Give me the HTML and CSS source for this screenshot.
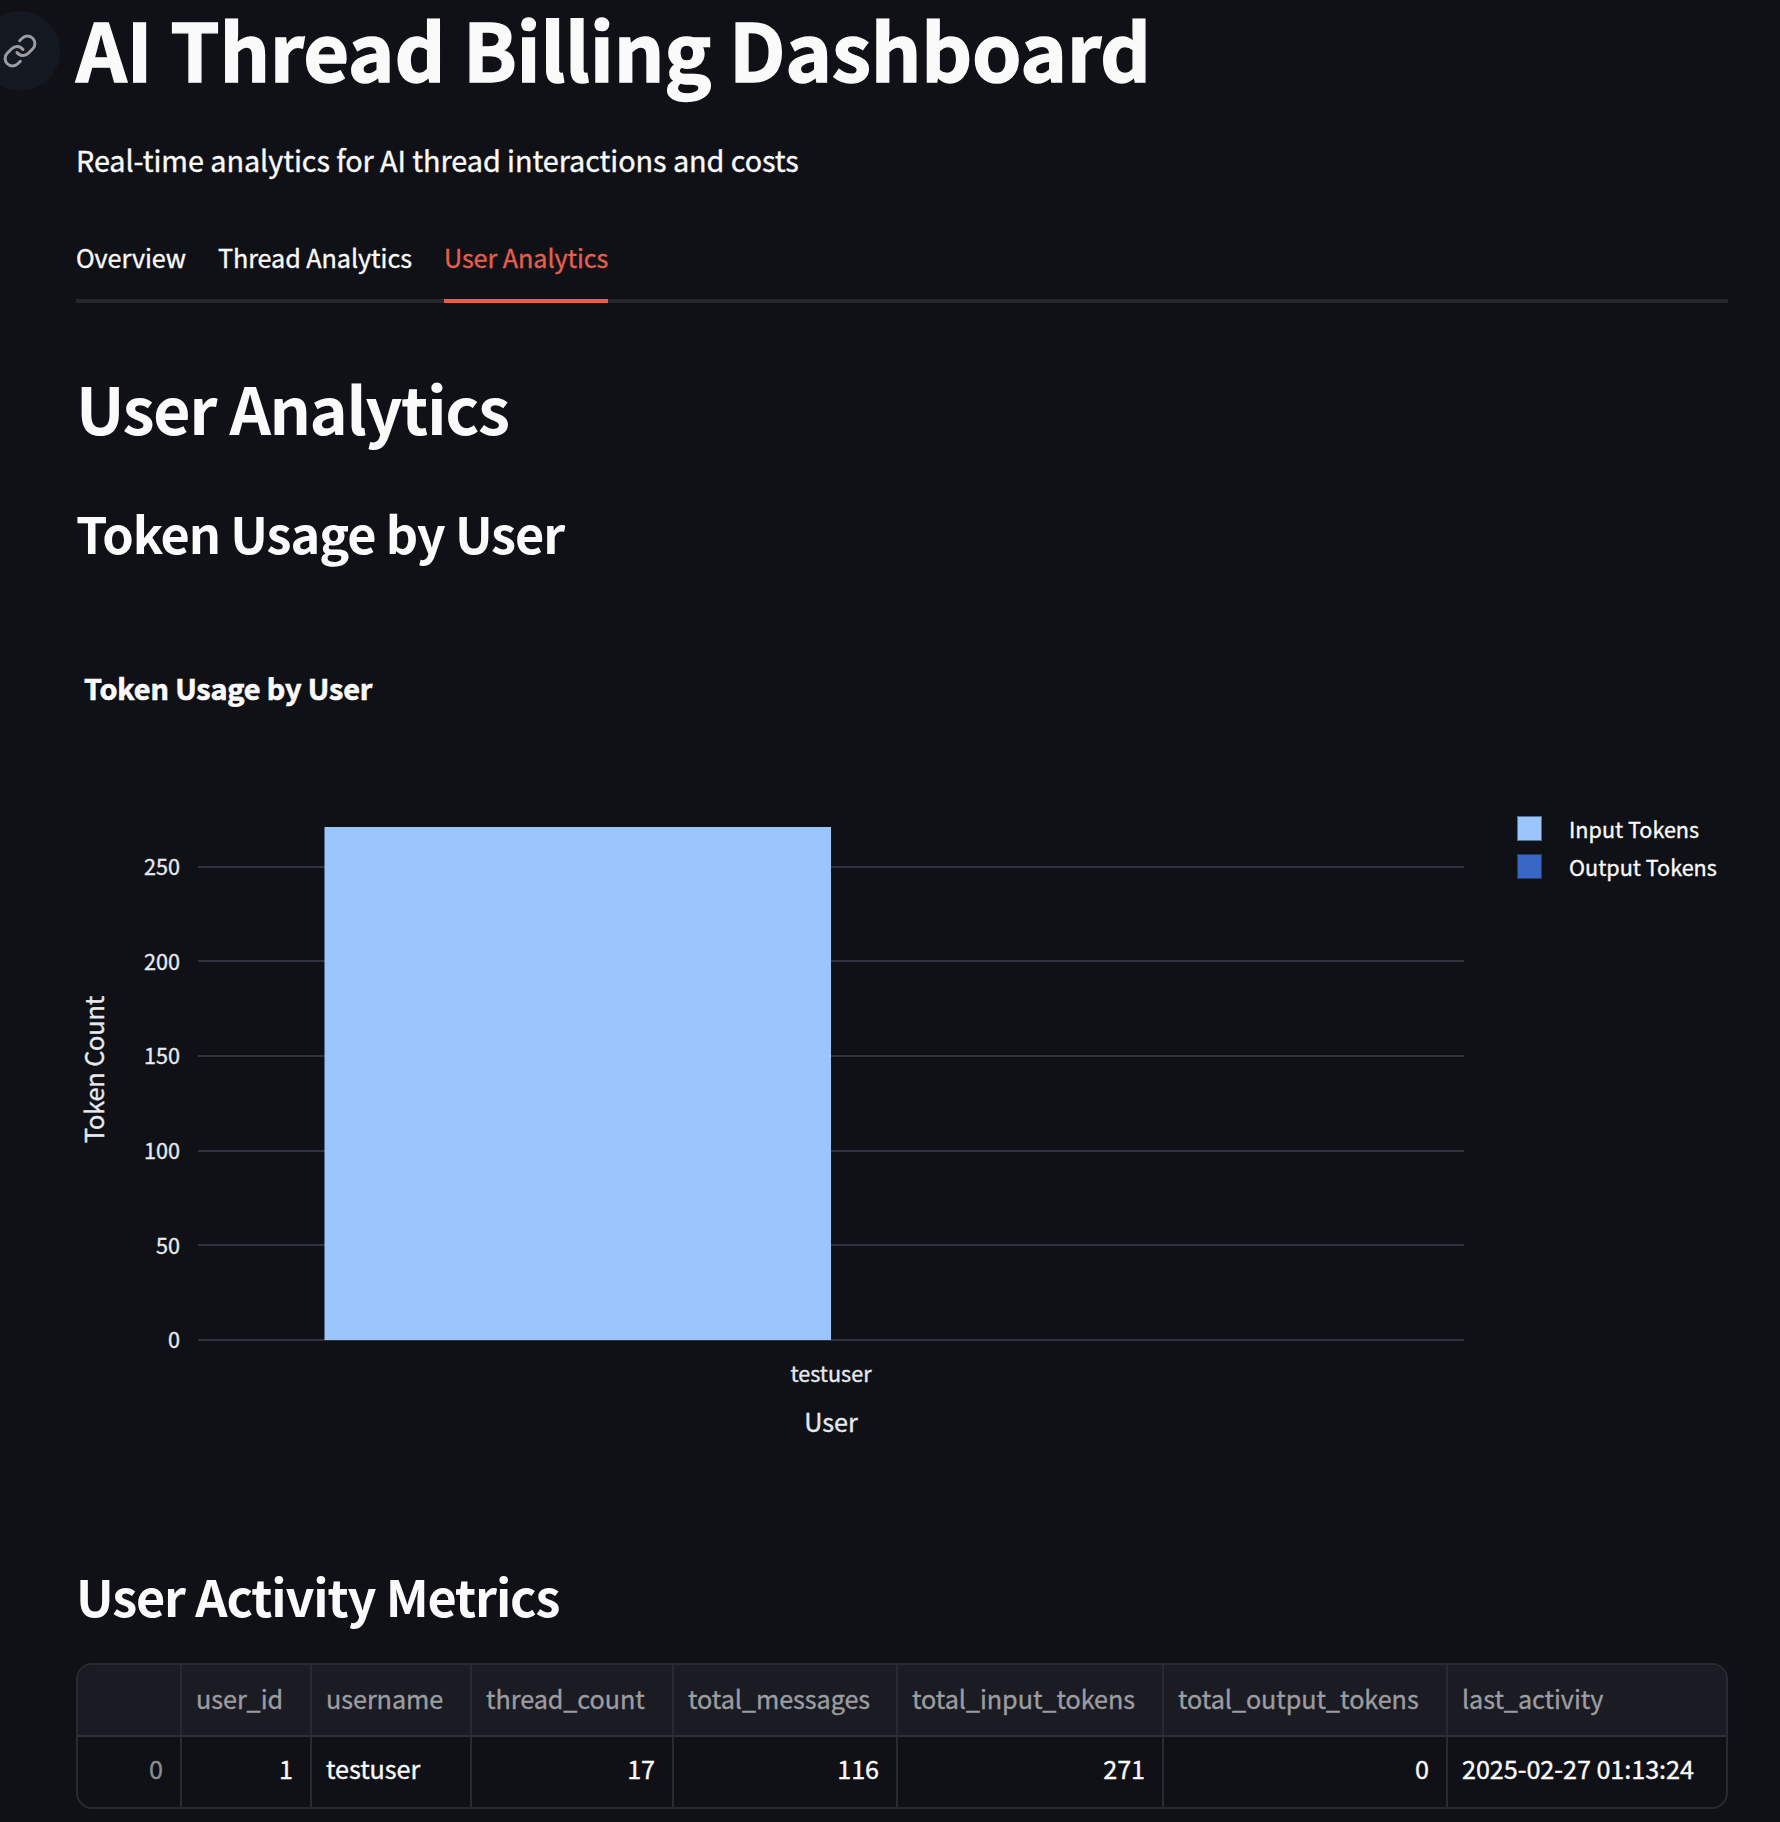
FILE: index.html
```html
<!DOCTYPE html>
<html lang="en">
<head>
<meta charset="utf-8">
<title>AI Thread Billing Dashboard</title>
<link rel="stylesheet" href="styles.css">
</head>
<body>
<main class="page">
  <header class="hero">
    <a class="anchor" href="#title" aria-label="Link to heading">
      <svg class="anchor-icon" viewBox="0 0 24 24"><path d="M10 13a5 5 0 0 0 7.54.54l3-3a5 5 0 0 0-7.07-7.07l-1.72 1.71"/><path d="M14 11a5 5 0 0 0-7.54-.54l-3 3a5 5 0 0 0 7.07 7.07l1.71-1.71"/></svg>
    </a>
    <h1 class="title" id="title">AI Thread Billing Dashboard</h1>
  </header>
  <p class="lead">Real-time analytics for AI thread interactions and costs</p>
  <nav class="tabs">
    <a class="tab">Overview</a>
    <a class="tab">Thread Analytics</a>
    <a class="tab tab-active">User Analytics</a>
  </nav>
  <h2 class="section">User Analytics</h2>
  <h3 class="subsection sub-usage">Token Usage by User</h3>
  <svg class="chart" viewBox="76 620 1652 880">
    <text class="chart-title" x="84" y="700">Token Usage by User</text>
    <g class="grid">
      <path d="M198 867H1464M198 961H1464M198 1056H1464M198 1151H1464M198 1245H1464M198 1340H1464"/>
    </g>
    <rect class="bar" x="324.5" y="827" width="506.5" height="513"/>
    <g class="tick tick-y">
      <text x="180" y="875">250</text>
      <text x="180" y="970">200</text>
      <text x="180" y="1064">150</text>
      <text x="180" y="1159">100</text>
      <text x="180" y="1254">50</text>
      <text x="180" y="1348">0</text>
    </g>
    <text class="tick tick-x" x="831" y="1382">testuser</text>
    <text class="axis" x="831" y="1432">User</text>
    <text class="axis axis-y" transform="translate(104 1069.5) rotate(-90)">Token Count</text>
    <rect class="swatch swatch-in" x="1517.5" y="816.5" width="24" height="24"/>
    <rect class="swatch swatch-out" x="1517.5" y="854.5" width="24" height="24"/>
    <text class="legend" x="1569" y="838">Input Tokens</text>
    <text class="legend" x="1569" y="876">Output Tokens</text>
  </svg>
  <h3 class="subsection sub-metrics">User Activity Metrics</h3>
  <div class="table">
    <div class="row row-head">
      <span class="cell"></span><span class="cell">user_id</span><span class="cell">username</span><span class="cell">thread_count</span><span class="cell">total_messages</span><span class="cell">total_input_tokens</span><span class="cell">total_output_tokens</span><span class="cell">last_activity</span>
    </div>
    <div class="row">
      <span class="cell num index">0</span><span class="cell num">1</span><span class="cell">testuser</span><span class="cell num">17</span><span class="cell num">116</span><span class="cell num">271</span><span class="cell num">0</span><span class="cell">2025-02-27 01:13:24</span>
    </div>
  </div>
</main>
</body>
</html>
```
FILE: styles.css
```css
* { box-sizing: border-box; }
body {
  margin: 0;
  background: #101116;
  color: #fafafa;
  font-family: "Noto Sans CJK JP", "Noto Sans", sans-serif;
  -webkit-text-stroke: 0.35px;
}
.page {
  width: 1780px;
  height: 1822px;
  padding: 0 52px 0 76px;
  display: flex;
  flex-direction: column;
}
h1, h2, h3, p { margin: 0; white-space: nowrap; }
.hero { position: relative; }
.anchor {
  position: absolute;
  left: -96px;
  top: 11px;
  width: 80px;
  height: 80px;
  border-radius: 50%;
  background: #141820;
  display: flex;
  align-items: center;
  justify-content: center;
}
.anchor-icon {
  width: 36px;
  height: 36px;
  fill: none;
  stroke: #9c9da0;
  stroke-width: 2;
  stroke-linecap: round;
  stroke-linejoin: round;
}
.title {
  font-size: 79.2px;
  line-height: 95px;
  font-weight: 700;
  letter-spacing: -0.24px;
  -webkit-text-stroke: 1.4px;
}
.lead { margin-top: 39px; font-size: 28.8px; line-height: 51px; letter-spacing: -0.06px; }
.tabs {
  margin-top: 50px;
  height: 68px;
  display: flex;
  gap: 32px;
  box-shadow: inset 0 -4px #26272d;
}
.tab { font-size: 25.2px; line-height: 45px; letter-spacing: -0.07px; white-space: nowrap; }
.tab-active { color: #e55f4e; border-bottom: 4px solid #e55f4e; }
.section {
  margin-top: 61px;
  font-size: 64.8px;
  line-height: 86px;
  font-weight: 700;
  letter-spacing: -1.45px;
  -webkit-text-stroke: 0;
}
.subsection {
  font-size: 50.4px;
  line-height: 67px;
  font-weight: 700;
  letter-spacing: -1.08px;
  -webkit-text-stroke: 0;
}
.sub-usage { margin-top: 49px; }
.chart { display: block; width: 1652px; height: 880px; margin-top: 54px; flex: none; }
.chart-title {
  font-size: 28.8px;
  font-weight: 700;
  fill: #fafafa;
  stroke: #fafafa;
  stroke-width: 0.7px;
  letter-spacing: -0.13px;
}
.grid { stroke: #31323d; stroke-width: 2; }
.bar { fill: #9ac6fc; }
.tick, .axis { fill: #e6eaf1; stroke: #e6eaf1; stroke-width: 0.35px; }
.tick { font-size: 21.6px; }
.tick-y { text-anchor: end; }
.tick-x { text-anchor: middle; }
.axis { font-size: 25.2px; text-anchor: middle; }
.axis-y { letter-spacing: -0.12px; }
.legend { font-size: 21.6px; fill: #fafafa; stroke: #fafafa; stroke-width: 0.35px; }
.swatch { stroke-width: 1; }
.swatch-in { fill: #9ac6fc; stroke: #557092; }
.swatch-out { fill: #3967c4; stroke: #253d6e; }
.sub-metrics { margin-top: 62px; letter-spacing: -1.14px; }
.table {
  margin-top: 34px;
  height: 146px;
  border: 2px solid #292a2f;
  border-radius: 16px;
  overflow: hidden;
  font-size: 25.2px;
  letter-spacing: -0.05px;
}
.row {
  display: grid;
  grid-template-columns: 104px 130px 160px 202px 224px 266px 284px 1fr;
  height: 70px;
  line-height: 63px;
}
.row-head {
  height: 72px;
  line-height: 67px;
  background: #1b1b23;
  color: #9c9da0;
  border-bottom: 2px solid #303137;
}
.cell { padding: 0 17px 0 14px; border-right: 2px solid #292a2f; white-space: nowrap; }
.cell:last-child { border-right: 0; }
.num { text-align: right; }
.index { color: #8d8e92; }
```
